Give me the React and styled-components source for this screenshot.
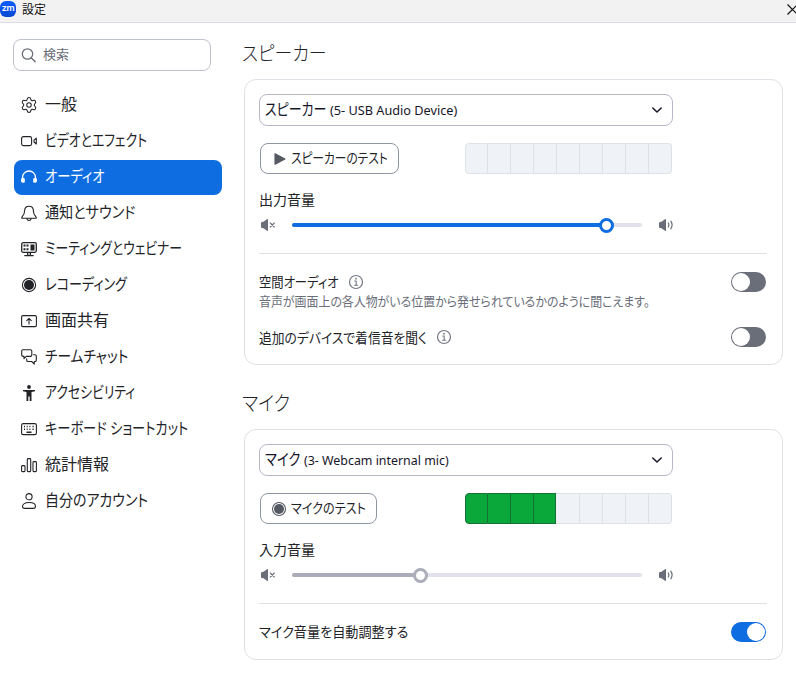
import React, { useLayoutEffect, useRef, useState } from "react";
import styled, { createGlobalStyle } from "styled-components";
import { Settings } from "lucide-react";

const GlobalStyle = createGlobalStyle`
  * { box-sizing: border-box; }
  body {
    margin: 0;
    background: #fff;
    color: #222327;
    font-family: "Noto Sans", "Noto Sans CJK JP", sans-serif;
    font-feature-settings: "palt" 1;
    overflow: hidden;
  }
`;

/* Text condensed to a given line width, as UI kana faces are. */
const FitBox = styled.span`
  display: block;
  flex: none;
  width: ${(p) => p.$w}px;
  height: ${(p) => p.$size * 1.5}px;
  margin-top: ${(p) => p.$dy || 0}px;
  font-size: ${(p) => p.$size}px;
  font-weight: ${(p) => p.$weight || 400};
  line-height: ${(p) => p.$size * 1.5}px;
  color: ${(p) => p.$color || "inherit"};
  white-space: pre;
`;
const FitInner = styled.span`
  display: inline-block;
  transform-origin: 0 50%;
`;

function Fit({ w, size = 14, children, ...rest }) {
  const ref = useRef(null);
  const [scale, setScale] = useState(1);
  useLayoutEffect(() => {
    setScale(w / ref.current.offsetWidth);
  }, [w]);
  return (
    <FitBox $w={w} $size={size} $weight={rest.weight} $color={rest.color} $dy={rest.dy}>
      <FitInner ref={ref} style={{ transform: `scaleX(${scale})` }}>{children}</FitInner>
    </FitBox>
  );
}

const Window = styled.div`
  width: 796px;
  height: 680px;
  display: flex;
  flex-direction: column;
  background: #fff;
`;
const TitleBar = styled.header`
  height: 23px;
  flex: none;
  display: flex;
  align-items: flex-start;
  background: #f2f2f2;
  border-bottom: 1px solid #dcdde8;
  overflow: hidden;
`;
const Logo = styled.div`
  width: 16px;
  height: 16px;
  margin: 1px 6px 0 0;
  border-radius: 6px;
  background: linear-gradient(#0b5cff, #0848cf);
  color: #fff;
  font: 600 9px/14px "Inter", sans-serif;
  letter-spacing: -0.3px;
  text-align: center;
`;
const CloseIcon = styled.svg`
  width: 11px;
  height: 11px;
  flex: none;
  margin: 4px -2px 0 auto;
`;
const Body = styled.div`
  flex: 1;
  display: flex;
`;
const Sidebar = styled.aside`
  width: 222px;
  flex: none;
  padding: 16px 0 0 13px;
`;
const Search = styled.div`
  width: 198px;
  height: 32px;
  display: flex;
  align-items: center;
  gap: 6px;
  padding-left: 7px;
  border: 1px solid #bfc3ce;
  border-radius: 8px;
`;
const Nav = styled.nav`
  display: flex;
  flex-direction: column;
  gap: 1px;
  margin: 17px 0 0 1px;
`;
const NavItem = styled.a`
  height: 35px;
  display: flex;
  align-items: center;
  gap: 8px;
  padding-left: 7px;
  border-radius: 8px;
  background: ${(p) => (p.$active ? "#0e6de0" : "transparent")};
  color: ${(p) => (p.$active ? "#fff" : "#222327")};
`;
const Glyph = styled.svg`
  width: ${(p) => p.$s || 16}px;
  height: ${(p) => p.$s || 16}px;
  flex: none;
  overflow: visible;
  fill: none;
  stroke: currentColor;
  stroke-width: 1.1;
  stroke-linecap: round;
  stroke-linejoin: round;
  color: ${(p) => p.$color || "inherit"};
`;
const NavGlyph = styled(Glyph)`
  margin-top: -1px;
`;
const Main = styled.main`
  flex: 1;
  padding: 0 13px 0 22px;
`;
const Heading = styled.h2`
  height: ${(p) => p.$h}px;
  margin: 0 0 0 -2px;
  padding-bottom: 10px;
  display: flex;
  align-items: flex-end;
`;
const Card = styled.section`
  width: 539px;
  height: ${(p) => p.$h}px;
  padding: 14px 15px 0 14px;
  border: 1px solid #e0e1e7;
  border-radius: 12px;
`;
const Select = styled.div`
  width: 414px;
  height: 32px;
  display: flex;
  align-items: center;
  padding: 0 9px 0 5px;
  border: 1px solid #b9b8cb;
  border-radius: 8px;
  color: #16152a;
`;
const Chevron = styled(Glyph)`
  margin-left: auto;
  stroke-width: 1.5;
`;
const TestRow = styled.div`
  display: flex;
  justify-content: space-between;
  width: 413px;
  margin: 17px 0 0 1px;
  padding-right: 1px;
`;
const TestButton = styled.button`
  width: ${(p) => p.$w}px;
  height: 31px;
  display: flex;
  align-items: center;
  gap: 4px;
  padding: 0 0 0 10px;
  border: 1px solid #8f96a3;
  border-radius: 8px;
  background: #fff;
  color: #222327;
  font: inherit;
`;
const Meter = styled.div`
  width: 207px;
  height: 31px;
  display: flex;
`;
const Segment = styled.span`
  flex: 0 0 ${(p) => (p.$end ? 22 : p.$next ? 24 : 23)}px;
  border: 1px solid ${(p) => (p.$on ? "#147334" : "#dee1e6")};
  border-left-width: 0;
  background: ${(p) => (p.$on ? "#0aa83a" : "#eff3f7")};
  &:first-child { border-left-width: 1px; border-radius: 4px 0 0 4px; }
  &:last-child { border-radius: 0 4px 4px 0; }
`;
const VolumeLabel = styled.div`
  margin-top: 15px;
`;
const SliderRow = styled.div`
  display: flex;
  align-items: center;
  width: 415px;
  height: 16px;
  margin-top: 7px;
  padding-left: 1px;
`;
const Track = styled.div`
  width: 350px;
  height: 4px;
  margin: 0 16px;
  display: flex;
  align-items: center;
  border-radius: 2px;
  background: #e1e2e9;
`;
const TrackFill = styled.div`
  height: 4px;
  border-radius: 2px;
  background: ${(p) => p.$color};
`;
const Thumb = styled.div`
  width: 15px;
  height: 15px;
  flex: none;
  margin-left: -8px;
  border: 3px solid ${(p) => p.$color};
  border-radius: 50%;
  background: #fff;
`;
const Divider = styled.hr`
  height: 1px;
  margin: 20px 0 18px;
  border: 0;
  background: #dfe0e5;
`;
const OptionRow = styled.div`
  display: flex;
  align-items: center;
  height: 20px;
  gap: 9px;
  margin-top: ${(p) => p.$mt || 0}px;
`;
const Toggle = styled.div`
  width: 35px;
  height: 20px;
  margin: 0 1px 0 auto;
  padding: 1px;
  display: flex;
  justify-content: ${(p) => (p.$on ? "flex-end" : "flex-start")};
  border-radius: 10px;
  background: ${(p) => (p.$on ? "#0e6de0" : "#6a6e79")};
  &::after {
    content: "";
    width: 18px;
    height: 18px;
    border-radius: 50%;
    background: #fff;
  }
`;
const GearIcon = styled(Settings)`
  flex: none;
  margin: -1px -1px 0;
`;

const icons = {
  gear: <GearIcon size={18} strokeWidth={1.4} />,
  video: (
    <NavGlyph viewBox="0 0 16 16">
      <rect x=".6" y="3.6" width="10" height="9" rx="1.8" />
      <path d="M13 7.2 15.3 5.2V11L13 9z" />
    </NavGlyph>
  ),
  audio: (
    <NavGlyph viewBox="0 0 16 16">
      <path d="M1.5 10V8.5a6.5 6.5 0 0 1 13 0V10" strokeWidth="1.3" />
      <path d="M1 9h1.6q1.2 0 1.2 1.2v2.6q0 1-1.2 1Q0 13.8 0 11.4 0 9.5 1 9zM15 9h-1.6q-1.2 0-1.2 1.2v2.6q0 1 1.2 1Q16 13.8 16 11.4 16 9.5 15 9z" fill="currentColor" stroke="none" />
    </NavGlyph>
  ),
  bell: (
    <NavGlyph viewBox="0 0 16 16">
      <path d="M8 1.2C5 1.2 3.6 3.5 3.6 6c0 3.2-1.3 4.700-2.600 6-.6.700-.3 1.300.5 1.300h13c.8 0 1.100-.6.500-1.300-1.300-1.300-2.600-2.800-2.600-6C12.400 3.500 11 1.200 8 1.200z" />
      <path d="M6 13.600a2 1.900 0 0 0 4 0" />
    </NavGlyph>
  ),
  meeting: (
    <NavGlyph viewBox="0 0 16 16">
      <rect x=".7" y="1.7" width="14.6" height="9.600" rx="1.5" strokeWidth="1.3" />
      <path d="M2.500 3.500h2v2h-2zM5.500 3.500h2v2h-2zM2.500 7.200h2v2h-2zM5.500 7.200h2v2h-2zM9.500 3.500h4v6h-4z" fill="currentColor" stroke="none" />
      <path d="M6.700 11.500v2.500M9.300 11.500v2.500M3.800 14.600h8.400" strokeWidth="1.3" />
    </NavGlyph>
  ),
  record: (
    <NavGlyph viewBox="0 0 16 16">
      <circle cx="8" cy="8" r="6.6" />
      <circle cx="8" cy="8" r="5" fill="currentColor" stroke="none" />
    </NavGlyph>
  ),
  share: (
    <NavGlyph viewBox="0 0 16 16">
      <rect x=".6" y="2.6" width="14.8" height="11" rx="1.3" />
      <path d="M8 11V5.700M5.700 7.700 8 5.400l2.300 2.300" />
    </NavGlyph>
  ),
  chat: (
    <NavGlyph viewBox="0 0 16 16">
      <path d="M2 .8h7.500q1.300 0 1.300 1.300v4q0 1.300-1.300 1.300H5.300L3 9.600V7.400H2Q.7 7.400.7 6.100v-4Q.7.800 2 .8z" />
      <path d="M12.600 5.700h1.300q1.400 0 1.400 1.300v4.200q0 1.300-1.300 1.300h-.7v2.600l-2.600-2.600H7q-1.300 0-1.300-1.300V9.800" />
    </NavGlyph>
  ),
  access: (
    <NavGlyph viewBox="0 0 16 16">
      <circle cx="8" cy="2" r="1.9" fill="currentColor" stroke="none" />
      <path d="M2 5h12v1.300l-3.500.8V16H8.700v-4.500H7.300V16H5.500V7.100L2 6.300z" fill="currentColor" stroke="none" />
    </NavGlyph>
  ),
  keyboard: (
    <NavGlyph viewBox="0 0 16 16">
      <rect x=".6" y="2.6" width="14.8" height="11" rx="1.7" />
      <path d="M3 5.500h1M5.700 5.500h1M8.400 5.500h1M11.500 5.500h1.200M3 8.300h1M5.700 8.300h1M8.400 8.300h1M11.500 8.300h1.200M5.500 11.200h5" strokeWidth="1.4" strokeLinecap="butt" />
    </NavGlyph>
  ),
  stats: (
    <NavGlyph viewBox="0 0 16 16">
      <rect x=".6" y="8.6" width="3.4" height="6" rx=".9" />
      <rect x="6.3" y="1.6" width="3.4" height="13" rx=".9" />
      <rect x="12" y="4.6" width="3.4" height="10" rx=".9" />
    </NavGlyph>
  ),
  person: (
    <NavGlyph viewBox="0 0 16 16">
      <circle cx="8" cy="3.7" r="3.1" />
      <path d="M8 9.500c-4 0-6.500 1.700-6.500 3.800 0 1.400.9 2.100 2.200 2.100h8.600c1.300 0 2.200-.7 2.200-2.100 0-2.100-2.500-3.800-6.500-3.800z" />
    </NavGlyph>
  ),
};

const navItems = [
  ["gear", "一般", 32],
  ["video", "ビデオとエフェクト", 102],
  ["audio", "オーディオ", 59],
  ["bell", "通知とサウンド", 90],
  ["meeting", "ミーティングとウェビナー", 137],
  ["record", "レコーディング", 82],
  ["share", "画面共有", 64],
  ["chat", "チームチャット", 83],
  ["access", "アクセシビリティ", 90],
  ["keyboard", "キーボード ショートカット", 143],
  ["stats", "統計情報", 64],
  ["person", "自分のアカウント", 103],
];

const Speaker = ({ muted }) => (
  <Glyph viewBox="0 0 16 16" $color="#6a6e79">
    <path d="M1 6q0-.9.9-1.1L3.500 4.700 7.300 2q.7-.3.7.4v11.200q0 .7-.7.4L3.500 11.300 1.900 11.100Q1 10.900 1 10z" fill="currentColor" stroke="none" />
    {muted ? (
      <path d="m10.300 6 4 4m0-4-4 4" />
    ) : (
      <path d="M10.300 6q1.300 2 0 4M12.800 4.200q2.600 3.800 0 7.600" strokeWidth="1.2" />
    )}
  </Glyph>
);

const Info = () => (
  <Glyph viewBox="0 0 16 16" $color="#747883">
    <circle cx="8" cy="8" r="6.5" strokeWidth="1.2" />
    <path d="M6.700 7h1.500v4.200M6.500 11.300h3.200" />
    <circle cx="8" cy="4.7" r=".9" fill="currentColor" stroke="none" />
  </Glyph>
);

const PlayIcon = () => (
  <Glyph viewBox="0 0 16 16" $color="#555962">
    <path d="M4 2.700v10.600L14 8z" fill="currentColor" />
  </Glyph>
);

const RecordIcon = () => (
  <Glyph viewBox="0 0 16 16" $color="#555962">
    <circle cx="8" cy="8" r="6.5" />
    <circle cx="8" cy="8" r="5" fill="currentColor" stroke="none" />
  </Glyph>
);

function DevicePanel({ height, device, deviceW, detail, detailW, test, testW, buttonW, icon, level, volume, value, color, children }) {
  return (
    <Card $h={height}>
      <Select>
        <Fit size={16} w={deviceW} dy={-2}>{device}</Fit>
        <Fit size={13} w={detailW} dy={2}>{detail}</Fit>
        <Chevron viewBox="0 0 12 12" $s={12}><path d="m1.800 4 4.200 4 4.200-4" /></Chevron>
      </Select>
      <TestRow>
        <TestButton $w={buttonW}>{icon}<Fit w={testW} dy={-2}>{test}</Fit></TestButton>
        <Meter>
          {Array.from({ length: 9 }, (_, i) => (
            <Segment key={i} $on={i < level} $end={level > 0 && i === level - 1} $next={level > 0 && i === level} />
          ))}
        </Meter>
      </TestRow>
      <VolumeLabel><Fit w={56}>{volume}</Fit></VolumeLabel>
      <SliderRow>
        <Speaker muted />
        <Track>
          <TrackFill $color={color} style={{ width: value }} />
          <Thumb $color={color} />
        </Track>
        <Speaker />
      </SliderRow>
      <Divider />
      {children}
    </Card>
  );
}

export default function App() {
  return (
    <Window>
      <GlobalStyle />
      <TitleBar>
        <Logo>zm</Logo>
        <Fit size={12} w={24} color="#111" dy={1}>設定</Fit>
        <CloseIcon viewBox="0 0 11 11"><path d="m.5.5 10 10m0-10-10 10" stroke="#111" strokeWidth="1.2" /></CloseIcon>
      </TitleBar>
      <Body>
        <Sidebar>
          <Search>
            <Glyph viewBox="0 0 16 16" $color="#6a6e79">
              <circle cx="6.5" cy="7" r="5.2" strokeWidth="1.3" />
              <path d="m10.400 11 3.800 3.700" strokeWidth="1.4" />
            </Glyph>
            <Fit size={13} w={26} color="#6a6e79">検索</Fit>
          </Search>
          <Nav>
            {navItems.map(([icon, label, w]) => (
              <NavItem key={icon} $active={icon === "audio"}>
                {icons[icon]}
                <Fit size={16} w={w} dy={-4}>{label}</Fit>
              </NavItem>
            ))}
          </Nav>
        </Sidebar>
        <Main>
          <Heading $h={56}><Fit size={20} w={85} weight={300}>スピーカー</Fit></Heading>
          <DevicePanel
            height={286} device="スピーカー " deviceW={65} detail="(5- USB Audio Device)" detailW={127}
            test="スピーカーのテスト" testW={97} buttonW={139} icon={<PlayIcon />} level={0}
            volume="出力音量" value={315} color="#0e6de0"
          >
            <OptionRow>
              <Fit w={80} dy={-2}>空間オーディオ</Fit><Info /><Toggle />
            </OptionRow>
            <Fit size={13} w={391}  color="#6a6e79">音声が画面上の各人物がいる位置から発せられているかのように聞こえます。</Fit>
            <OptionRow $mt={15.5}>
              <Fit w={168}>追加のデバイスで着信音を聞く</Fit><Info /><Toggle />
            </OptionRow>
          </DevicePanel>
          <Heading $h={64}><Fit size={20} w={48} weight={300}>マイク</Fit></Heading>
          <DevicePanel
            height={231} device="マイク " deviceW={39} detail="(3- Webcam internal mic)" detailW={145}
            test="マイクのテスト" testW={75} buttonW={117} icon={<RecordIcon />} level={4}
            volume="入力音量" value={129} color="#abadb8"
          >
            <OptionRow>
              <Fit w={149} dy={-2}>マイク音量を自動調整する</Fit><Toggle $on />
            </OptionRow>
          </DevicePanel>
        </Main>
      </Body>
    </Window>
  );
}
